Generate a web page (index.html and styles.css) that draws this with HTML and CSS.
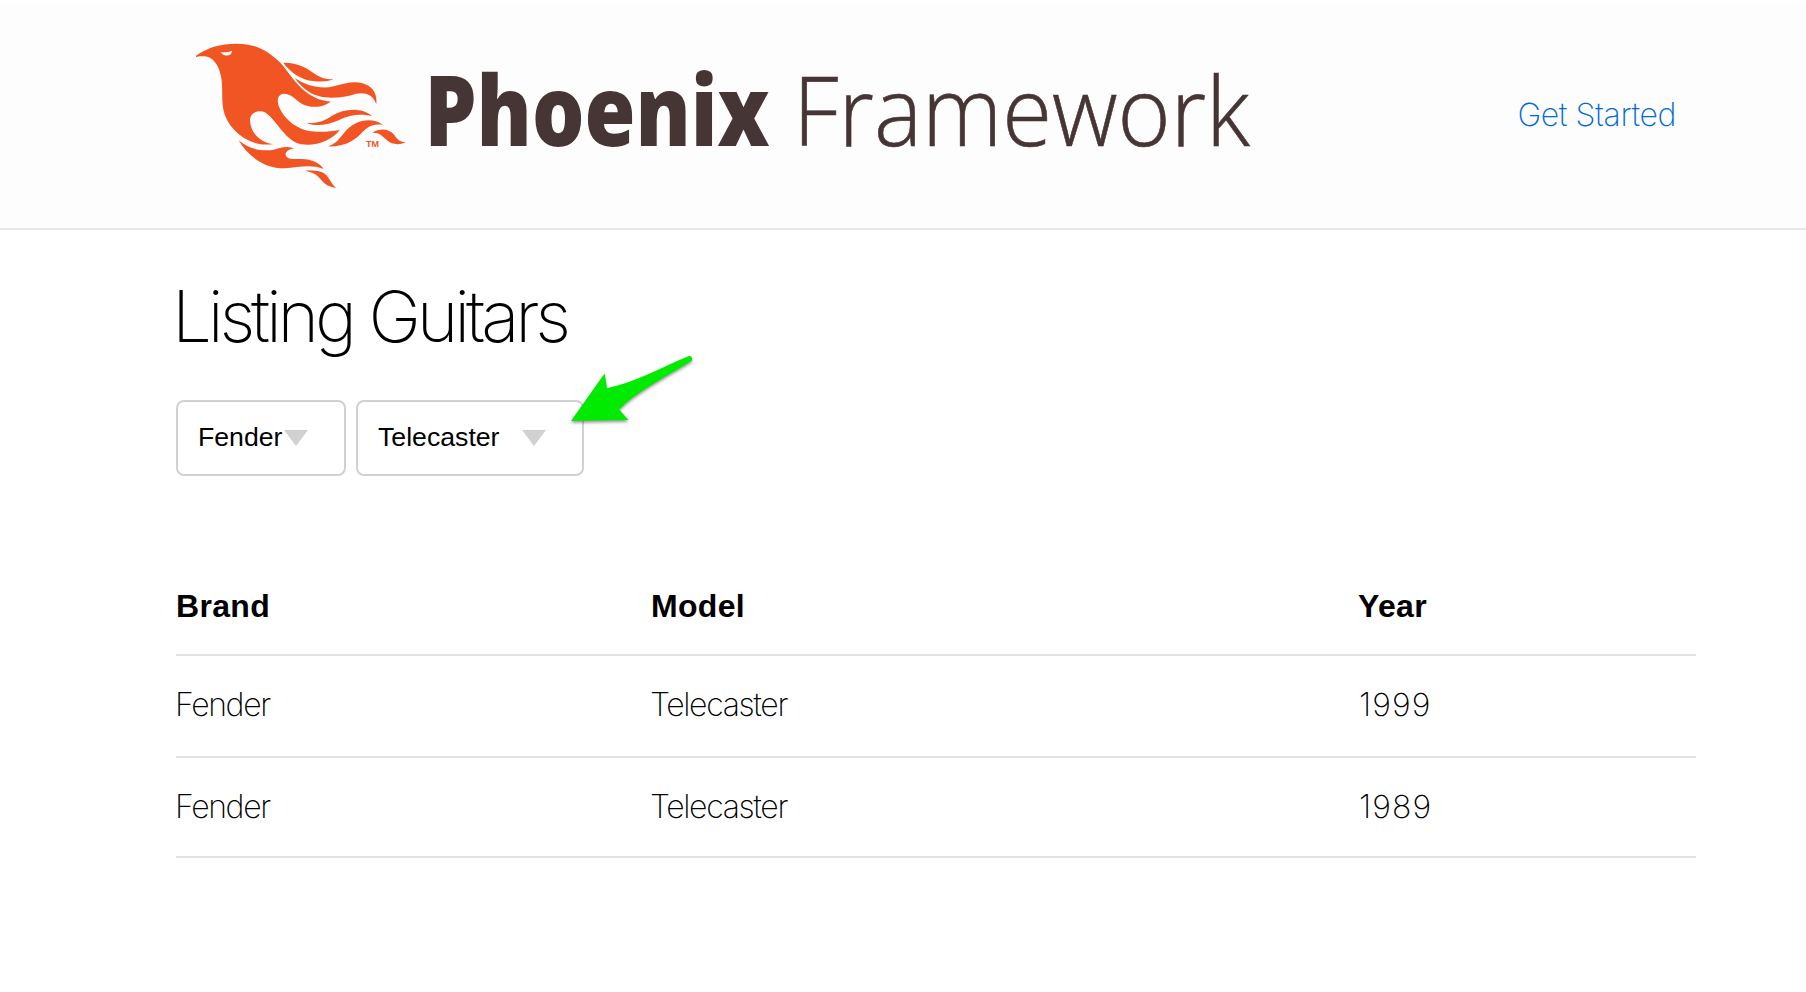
FILE: index.html
```html
<!DOCTYPE html>
<html lang="en">
<head>
<meta charset="utf-8">
<title>Listing Guitars</title>
<link rel="stylesheet" href="styles.css">
</head>
<body>
<header class="site-header">
  <div class="container header-row">
    <svg class="logo" viewBox="180 30 1080 170" role="img" aria-label="Phoenix Framework">
      <g class="bird" transform="translate(180 30) scale(.33333)">
        <path fill-rule="evenodd" d="M48 77C80 54 120 41 170 41C226 41 262 60 302 99C326 126 345 162 382 189C405 205 429 214 452 214C438 229 408 235 380 227C349 219 340 190 311 191C294 193 290 209 296 227C305 255 337 291 382 302C417 308 447 305 479 300C457 331 406 350 364 343C316 333 292 273 257 248C235 237 213 247 210 268C209 303 238 339 281 342C232 350 184 330 151 286C119 239 130 205 125 151C121 117 105 81 73 79C62 78 54 79 48 81ZM121 68C130 65 145 68 156 62C156 75 144 78 134 76C128 75 127 69 121 68Z"/>
        <path d="M310 98C339 97 366 106 386 119C412 137 431 150 460 147C440 157 409 156 381 150C351 141 325 119 310 98Z"/>
        <path d="M344 144C379 167 423 179 461 169C495 161 519 152 548 160C581 170 592 194 589 223C579 193 556 186 529 191C492 202 454 208 418 199C385 191 360 166 344 144Z"/>
        <path d="M381 279C413 280 430 274 455 258C495 234 546 233 576 258C537 250 510 255 479 269C445 285 405 291 381 279Z"/>
        <path d="M443 349C467 343 477 327 492 309C523 270 573 260 609 284C574 280 562 291 544 310C517 339 484 351 443 349Z"/>
        <path d="M577 308C602 293 628 297 643 315C654 330 657 335 677 337C658 346 635 344 621 331C605 316 598 307 577 308Z"/>
        <path d="M176 331C200 351 229 362 263 361C298 360 305 343 342 355C324 358 313 368 318 378C325 391 346 386 365 387C397 388 418 398 431 417C395 402 357 411 314 415C257 416 204 381 176 331Z"/>
        <path d="M376 422C410 421 430 423 443 440C455 457 458 465 469 474C437 469 430 456 415 440C403 428 389 427 376 422Z"/>
        <text class="tm" x="558" y="352" textLength="39" lengthAdjust="spacingAndGlyphs">TM</text>
      </g>
      <text class="word word-bold" x="424.500" y="145.500" textLength="345" lengthAdjust="spacingAndGlyphs">Phoenix</text>
      <text class="word word-light" x="793" y="145.500" textLength="457" lengthAdjust="spacingAndGlyphs">Framework</text>
    </svg>
    <a class="nav-link">Get Started</a>
  </div>
</header>
<main class="container">
  <h1>Listing Guitars</h1>
  <form class="filters">
    <div class="select brand"><span>Fender</span><svg class="caret" viewBox="0 0 24 16"><path d="M0 0H24L12 16Z"/></svg></div>
    <div class="select model"><span>Telecaster</span><svg class="caret" viewBox="0 0 24 16"><path d="M0 0H24L12 16Z"/></svg>
      <svg class="pointer" viewBox="566 350 136 80"><path d="M571 421L604.600 373.500L607 388.300C636 382 662 367 689 356Q693 356 692 360.500C665 377 636 392 619 409.500L628.600 420Z"/></svg>
    </div>
  </form>
  <table>
    <thead><tr><th class="c1">Brand</th><th class="c2">Model</th><th>Year</th></tr></thead>
    <tbody>
      <tr><td>Fender</td><td>Telecaster</td><td class="year">1999</td></tr>
      <tr><td>Fender</td><td>Telecaster</td><td class="year">1989</td></tr>
    </tbody>
  </table>
</main>
</body>
</html>
```
FILE: styles.css
```css
* { box-sizing: border-box; }
body {
  margin: 0;
  padding-top: 4px;
  background: #fff;
  color: #000;
  font-family: Inter, "Liberation Sans", sans-serif;
  font-size: 32px;
  font-weight: 200;
}
.container { width: 1520px; margin-left: 176px; }
.site-header { height: 226px; background: #fdfdfd; border-bottom: 2px solid #e9e9e9; }
.header-row { display: flex; justify-content: space-between; padding: 26px 20px 0 4px; }
.logo { width: 1080px; height: 170px; overflow: visible; }
.bird { fill: #f15524; }
.tm { font: bold 28px "Liberation Sans", sans-serif; }
.word { fill: #463535; font-family: "Open Sans", "Noto Sans", sans-serif; font-size: 96.6px; }
.word-bold { font-weight: 800; }
.word-light { font-weight: 300; stroke: #463535; stroke-width: .6px; }
.nav-link { margin-top: 65px; line-height: 40px; color: #0069d9; letter-spacing: -.4px; white-space: nowrap; }
h1 { margin: 0 0 0 -4px; padding-top: 43px; font-size: 71px; font-weight: 200; line-height: 86px; letter-spacing: -4.25px; }
.filters { display: flex; gap: 10px; margin: 41px 0 0; }
.select {
  position: relative;
  display: flex;
  align-items: center;
  height: 76px;
  padding: 0 0 2px 20px;
  border: 2px solid #d1d1d1;
  border-radius: 8px;
  font: 26.67px "Liberation Sans", sans-serif;
}
.brand { width: 170px; }
.model { width: 228px; }
.caret { width: 24px; height: 16px; margin-top: 2px; fill: #d1d1d1; }
.brand .caret { margin-left: 2px; }
.model .caret { margin-left: 22px; }
.pointer { position: absolute; left: 208px; top: -52px; width: 136px; height: 80px; fill: #00eb00; filter: drop-shadow(0 2px 1.5px rgba(0,0,0,.4)); }
table { width: 100%; margin-top: 78px; border-collapse: separate; border-spacing: 0; table-layout: fixed; }
th, td { height: 102px; padding: 0 0 2px; border-bottom: 2px solid #e1e1e1; text-align: left; line-height: 40px; }
th { padding: 4px 0 0; font: bold 32px/40px "Liberation Sans", sans-serif; letter-spacing: .32px; }
td { text-indent: -1px; letter-spacing: -1.35px; }
tr:last-child td { height: 100px; padding-bottom: 0; }
tr:last-child th { height: 102px; }
.year { padding-left: 2px; letter-spacing: 1.1px; }
.c1 { width: 475px; }
.c2 { width: 707px; }
```
